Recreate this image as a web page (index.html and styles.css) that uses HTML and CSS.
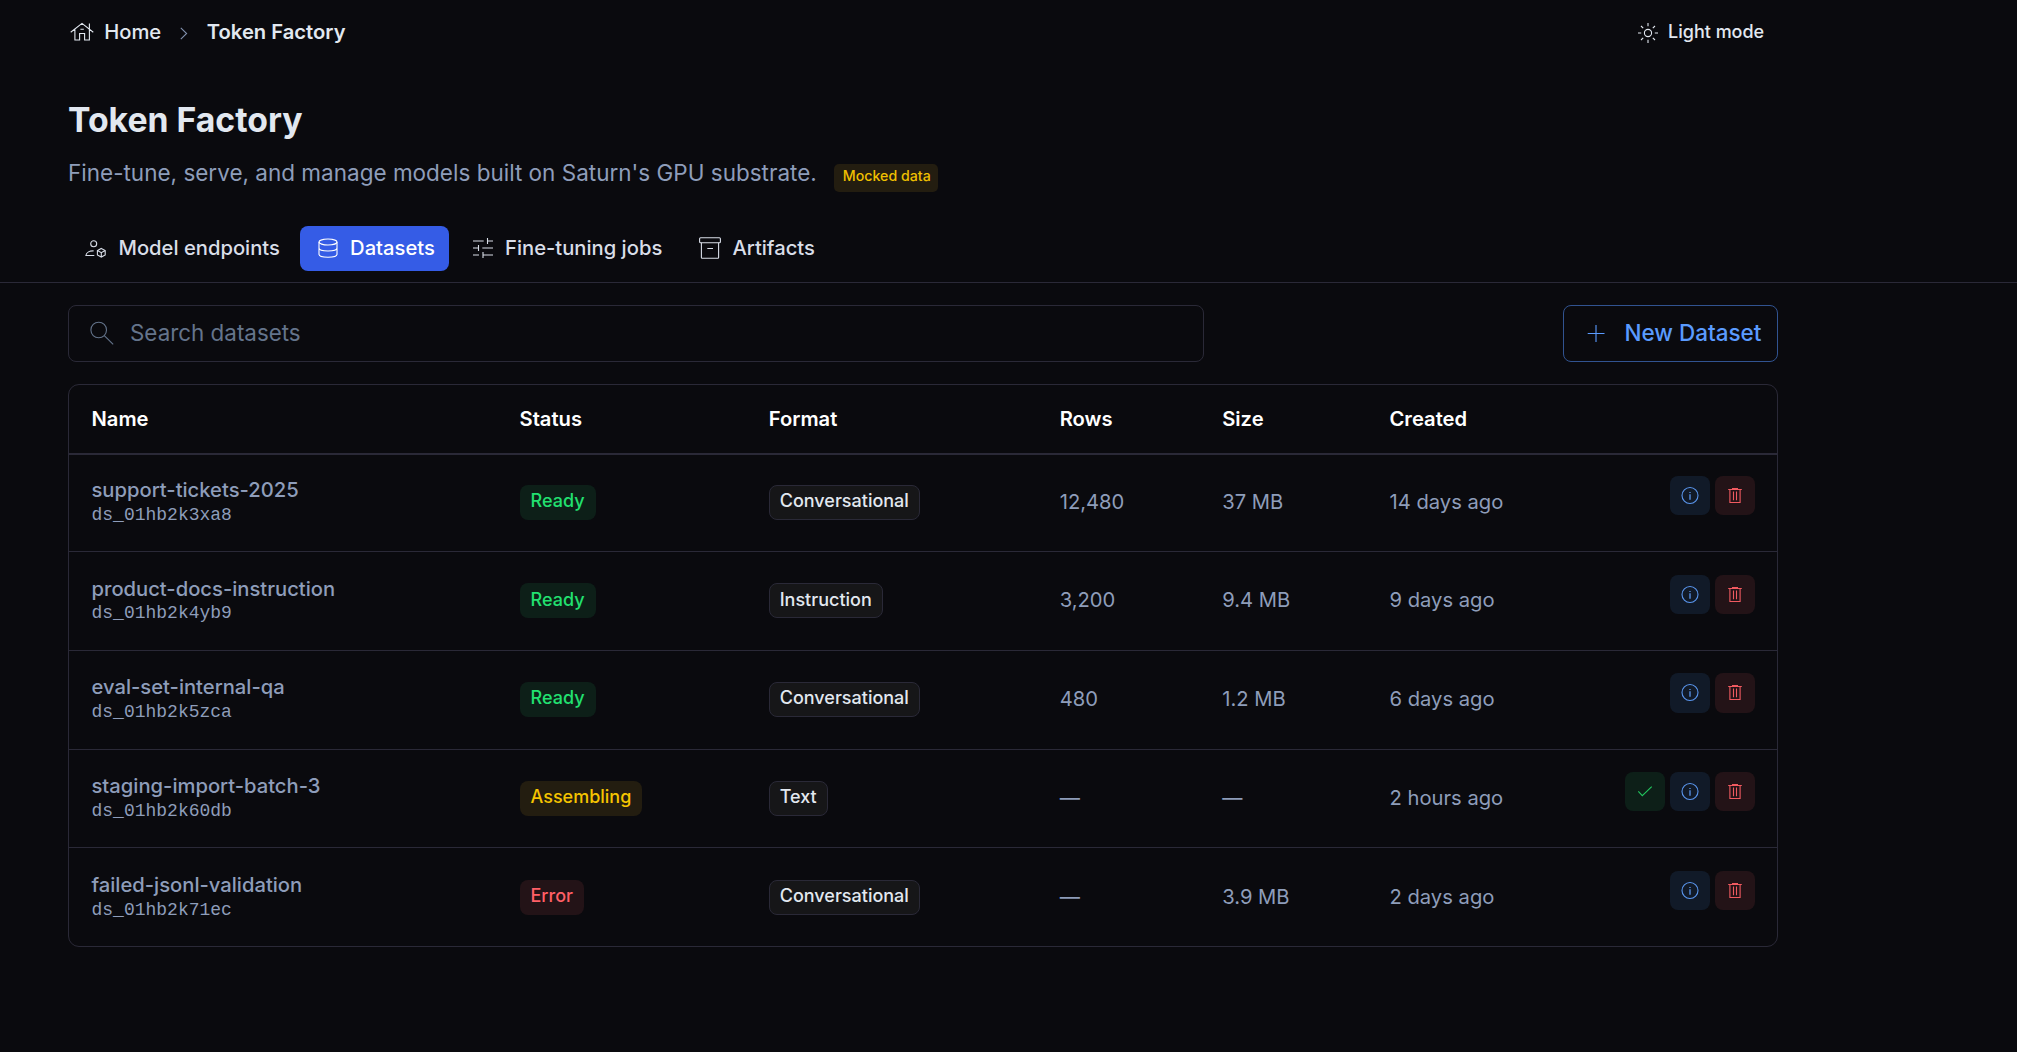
FILE: index.html
```html
<!DOCTYPE html>
<html lang="en">
<head>
<meta charset="utf-8">
<title>Token Factory</title>
<link rel="stylesheet" href="styles.css">
</head>
<body>
<svg class="sprite" aria-hidden="true">
  <symbol id="info" viewBox="0 0 20 19"><circle cx="10" cy="9.5" r="8"/><path d="M10 8.3v5.4" stroke-width="1.3"/><path d="M10 5.9v1.2" stroke-width="1.3"/></symbol>
  <symbol id="trash" viewBox="0 0 20 19"><path d="M3.2 3.5h13.6M7 2.5h6"/><path d="M4.9 3.5v13h10.2v-13"/><path d="M8.5 5.6v8.6M11.5 5.6v8.6"/></symbol>
  <symbol id="check" viewBox="0 0 20 19"><path d="M3.3 9.3L7.3 13.7L16.7 4.7"/></symbol>
</svg>

<header class="topbar">
  <nav class="crumbs">
    <svg class="home" viewBox="0 0 24 22"><path d="M.7 11.3L12 2.4L23.3 11.3M4.9 8.5V19H9.6V12.5H14.6V19H19.4V8.5M19.4 8.2V2.6M10.4 8.2h3.4"/></svg>
    <a class="crumb">Home</a>
    <svg class="chev" viewBox="0 0 8 13"><path d="M.8 .8L6.6 6.5L.8 12.2"/></svg>
    <span class="crumb here">Token Factory</span>
  </nav>
  <button class="mode">
    <svg viewBox="0 0 22 22"><circle cx="11" cy="11" r="3.6"/><path d="M11 1v3.2M11 17.8V21M1 11h3.2M17.8 11H21M4 4l2.2 2.2M15.8 15.8L18 18M4 18l2.2-2.2M15.8 6.2L18 4"/></svg>
    <span>Light mode</span>
  </button>
</header>

<section class="intro">
  <h1>Token Factory</h1>
  <p class="lead"><span>Fine-tune, serve, and manage models built on Saturn's GPU substrate.</span><span class="mock">Mocked data</span></p>
</section>

<nav class="tabs">
  <a class="tab"><svg viewBox="0 0 24 25"><circle cx="9.7" cy="7.7" r="3"/><path d="M9.6 14.9C5.8 14.7 2.3 16.3 1.9 19.5H10.3"/><path d="M17.3 12.4l3.9 2.1v4.4l-3.9 2.2l-3.9-2.2v-4.4zM13.4 14.5l3.9 2.2l3.9-2.2M17.3 16.7v4.4"/></svg><span>Model endpoints</span></a>
  <a class="tab active"><svg viewBox="0 0 24 25"><ellipse cx="12" cy="6" rx="9" ry="3"/><path d="M3 6v12.2c0 1.8 4 3 9 3s9-1.2 9-3V6M3 12c0 1.8 4 3 9 3s9-1.2 9-3"/></svg><span>Datasets</span></a>
  <a class="tab"><svg viewBox="0 0 24 25"><path d="M2 5h10.7M16.5 2v6M16.5 5H22M2 12h5.5M7.5 9v6M11.3 12H22M2 19h6M12 16v6M12 19h10"/></svg><span>Fine-tuning jobs</span></a>
  <a class="tab"><svg viewBox="0 0 24 25"><rect x="1.6" y="1.8" width="20.8" height="5" rx="1"/><path d="M3.4 6.8v14.7q0 .7.7.7h15.8q.7 0 .7-.7V6.8M9.3 12.5h5.7"/></svg><span>Artifacts</span></a>
</nav>

<main class="content">
  <div class="tools">
    <label class="search"><svg viewBox="0 0 26 27"><circle cx="9.7" cy="10" r="7.8"/><path d="M15.3 15.6L24.2 24.4"/></svg><span>Search datasets</span></label>
    <button class="new"><svg viewBox="0 0 18 19"><path d="M.7 9.5h16.8M9 1v17"/></svg><span>New Dataset</span></button>
  </div>

  <div class="table">
    <div class="row head"><span>Name</span><span>Status</span><span>Format</span><span>Rows</span><span>Size</span><span>Created</span></div>
    <div class="row first">
      <div class="name"><b>support-tickets-2025</b><code>ds_01hb2k3xa8</code></div>
      <div class="cell"><span class="badge green">Ready</span></div>
      <div class="cell"><span class="badge plain">Conversational</span></div>
      <span class="val">12,480</span><span class="val">37 MB</span><span class="val">14 days ago</span>
      <div class="acts"><button class="act blue"><svg><use href="#info"/></svg></button><button class="act red"><svg><use href="#trash"/></svg></button></div>
    </div>
    <div class="row">
      <div class="name"><b>product-docs-instruction</b><code>ds_01hb2k4yb9</code></div>
      <div class="cell"><span class="badge green">Ready</span></div>
      <div class="cell"><span class="badge plain">Instruction</span></div>
      <span class="val">3,200</span><span class="val">9.4 MB</span><span class="val">9 days ago</span>
      <div class="acts"><button class="act blue"><svg><use href="#info"/></svg></button><button class="act red"><svg><use href="#trash"/></svg></button></div>
    </div>
    <div class="row">
      <div class="name"><b>eval-set-internal-qa</b><code>ds_01hb2k5zca</code></div>
      <div class="cell"><span class="badge green">Ready</span></div>
      <div class="cell"><span class="badge plain">Conversational</span></div>
      <span class="val">480</span><span class="val">1.2 MB</span><span class="val">6 days ago</span>
      <div class="acts"><button class="act blue"><svg><use href="#info"/></svg></button><button class="act red"><svg><use href="#trash"/></svg></button></div>
    </div>
    <div class="row">
      <div class="name"><b>staging-import-batch-3</b><code>ds_01hb2k60db</code></div>
      <div class="cell"><span class="badge yellow">Assembling</span></div>
      <div class="cell"><span class="badge plain">Text</span></div>
      <span class="val">—</span><span class="val">—</span><span class="val">2 hours ago</span>
      <div class="acts"><button class="act ok"><svg><use href="#check"/></svg></button><button class="act blue"><svg><use href="#info"/></svg></button><button class="act red"><svg><use href="#trash"/></svg></button></div>
    </div>
    <div class="row">
      <div class="name"><b>failed-jsonl-validation</b><code>ds_01hb2k71ec</code></div>
      <div class="cell"><span class="badge error">Error</span></div>
      <div class="cell"><span class="badge plain">Conversational</span></div>
      <span class="val">—</span><span class="val">3.9 MB</span><span class="val">2 days ago</span>
      <div class="acts"><button class="act blue"><svg><use href="#info"/></svg></button><button class="act red"><svg><use href="#trash"/></svg></button></div>
    </div>
  </div>
</main>
</body>
</html>
```
FILE: styles.css
```css
* { box-sizing: border-box; margin: 0; }
body {
  width: 2017px;
  height: 1052px;
  overflow: hidden;
  background: #0a0a0e;
  color: #e2e8f0;
  font-family: Inter, "Liberation Sans", sans-serif;
  font-size: 20.2px;
}
svg { flex: none; fill: none; stroke: currentColor; stroke-width: 1.1; }
button { border: 0; background: none; color: inherit; font: inherit; padding: 0; }
.sprite { display: none; }

.topbar { display: flex; justify-content: space-between; width: 1778px; height: 64px; padding: 0 13.8px 0 70px; }
.crumbs { display: flex; align-items: center; height: 64px; font-weight: 500; }
.crumb { line-height: 64px; }
.crumb.here { font-weight: 600; }
.home { width: 24px; height: 22px; margin-right: 10.2px; }
.chev { width: 8px; height: 13px; margin: 2px 19px 0 18.6px; color: #8190ad; }
.mode { display: flex; align-items: center; height: 64px; font-size: 18px; font-weight: 500; line-height: 62px; }
.mode svg { width: 22px; height: 22px; margin: 1px 9px 0 0; }

.intro { padding: 35px 0 0 68px; }
h1 { font-size: 33.75px; font-weight: 700; line-height: 42px; }
.lead { display: flex; height: 34px; margin-top: 15px; color: #8e9dba; font-size: 22.5px; line-height: 34px; }
.mock { height: 28px; margin: 8px 0 0 17.2px; padding: 0 7.5px 0 8.8px; border-radius: 5px; background: #231d10; color: #f0c000; font-size: 14.2px; font-weight: 500; line-height: 24px; }

.tabs { display: flex; gap: 5.3px; height: 57px; margin-top: 36px; padding-left: 68px; border-bottom: 1px solid #2a2937; }
.tab { display: flex; align-items: center; gap: 10.5px; height: 45px; padding: 0 14.4px 0 16px; border-radius: 8px; font-weight: 500; line-height: 43px; color: #d9dee8; }
.tab svg { width: 24px; height: 25px; }
.tab span { padding-bottom: 2px; }
.tab.active { background: #355ce6; color: #fff; }

.content { width: 1778px; padding: 22px 0 0 68px; }
.tools { display: flex; justify-content: space-between; height: 57px; line-height: 27px; }
.search { display: flex; align-items: center; width: 1136px; padding-left: 20px; border: 1px solid #2a2937; border-radius: 8px; color: #64748b; font-size: 22.4px; }
.search svg { width: 26px; height: 27px; margin-right: 15px; }
.search span, .new span { padding-bottom: 2px; }
.new { display: flex; align-items: center; width: 215px; padding-left: 23px; border: 1px solid #315390; border-radius: 8px; color: #5a9bff; font-size: 22.5px; font-weight: 500; }
.new svg { width: 18px; height: 19px; margin-right: 19.4px; }

.table { margin-top: 22px; border: 1px solid #2a2937; border-radius: 11px; }
.row { display: grid; grid-template-columns: 428px 249.2px 291px 162.5px 167.3px 1fr auto; height: 98.75px; padding: 0 22px 0 22.5px; border-bottom: 1px solid #2a2937; color: #8e9dba; }
.row:last-child { height: 97.75px; border-bottom: 0; }
.head { height: 68.45px; border: 0; color: #fff; font-weight: 600; line-height: 68px; }
.first { border-top: 2px solid #2a2937; }
.first > * { margin-top: -2px; }
.name { display: flex; flex-direction: column; padding-top: 24.5px; }
.name b { font-weight: 500; line-height: 24px; }
.name code { margin-top: .7px; font: 18px/24px "Liberation Mono", monospace; }
.cell { padding-top: 31.15px; }
.badge { display: block; width: max-content; height: 35px; padding: .4px 11px 0; border-radius: 8px; font-size: 18px; font-weight: 500; line-height: 31px; }
.plain { padding: .4px 10px 0; border: 1px solid #2a2937; background: #161618; color: #e2e8f0; line-height: 29px; }
.green { background: #0d1f18; color: #22e070; }
.yellow { background: #231d10; color: #f5c400; }
.error { background: #231317; color: #ff5f66; }
.val { padding-top: .15px; line-height: 95px; }
.acts { display: flex; align-items: flex-start; gap: 5px; padding-top: 22.4px; }
.act { display: flex; align-items: center; justify-content: center; width: 40px; height: 39.3px; border-radius: 8px; }
.act svg { width: 20px; height: 19px; }
.blue { background: #111a28; color: #5a96ee; }
.red { background: #231317; color: #f05a60; }
.ok { background: #0d1f18; color: #22c55e; }
```
